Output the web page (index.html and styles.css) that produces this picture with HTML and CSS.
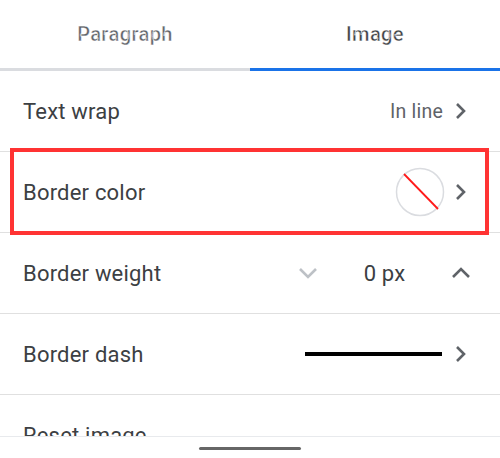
FILE: index.html
```html
<!DOCTYPE html>
<html lang="en">
<head>
    <meta charset="UTF-8">
    <meta name="viewport" content="width=device-width, initial-scale=1.0">
    <title>Image options</title>
    <link rel="stylesheet" href="styles.css">
</head>
<body>
    <div class="screen">
        <!-- 탭 -->
        <div class="tabs">
            <div class="tab">Paragraph</div>
            <div class="tab active">Image</div>
        </div>

        <!-- 옵션 목록 -->
        <div class="options">
            <div class="row">
                <span class="label">Text wrap</span>
                <div class="value">
                    <span class="value-text">In line</span>
                    <svg class="chev" viewBox="0 0 12 18"><path d="M2 2l7 7-7 7" /></svg>
                </div>
            </div>
            <div class="row highlighted">
                <span class="label">Border color</span>
                <div class="value">
                    <svg class="swatch" viewBox="0 0 50 50">
                        <circle cx="25" cy="25" r="23.5" fill="#fff" stroke="#dadce0" stroke-width="1.5" />
                        <line x1="9" y1="7" x2="43" y2="42" stroke="#ff1a1a" stroke-width="1.8" />
                    </svg>
                    <svg class="chev" viewBox="0 0 12 18"><path d="M2 2l7 7-7 7" /></svg>
                </div>
                <div class="mark"></div>
            </div>
            <div class="row">
                <span class="label">Border weight</span>
                <div class="stepper">
                    <svg class="arrow dim" viewBox="0 0 20 12"><path d="M2 2l8 8 8-8" /></svg>
                    <span class="step-value">0 px</span>
                    <svg class="arrow" viewBox="0 0 20 12"><path d="M2 10l8-8 8 8" /></svg>
                </div>
            </div>
            <div class="row">
                <span class="label">Border dash</span>
                <div class="value">
                    <span class="dash"></span>
                    <svg class="chev" viewBox="0 0 12 18"><path d="M2 2l7 7-7 7" /></svg>
                </div>
            </div>
            <div class="row">
                <span class="label">Reset image</span>
            </div>
        </div>

        <div class="navbar">
            <span class="handle"></span>
        </div>
    </div>
</body>
</html>
```

FILE: styles.css
```css
/* 기본 스타일 */
body {
    margin: 0;
    font-family: Roboto, "Noto Sans", Arial, sans-serif;
    background-color: #fff;
    color: #3c4043;
}

.screen {
    position: relative;
    width: 500px;
    height: 458px;
    overflow: hidden;
    display: flex;
    flex-direction: column;
}

/* 탭 */
.tabs {
    display: flex;
    height: 71px;
    flex-shrink: 0;
}

.tab {
    flex: 1;
    display: flex;
    align-items: center;
    justify-content: center;
    font-size: 20px;
    font-weight: 500;
    letter-spacing: 0.4px;
    color: #5f6368;
    border-bottom: 3px solid #dadce0;
    -webkit-text-stroke: 0.35px #fff;
}

.tab.active {
    color: #3c4043;
    border-bottom-color: #1a73e8;
}

/* 옵션 목록 */
.options {
    height: 365px;
    overflow: hidden;
    flex-shrink: 0;
}

.row {
    position: relative;
    height: 80px;
    display: flex;
    align-items: center;
    justify-content: space-between;
    padding: 0 33px 0 23px;
    border-bottom: 1px solid #e0e0e0;
}

.label {
    font-size: 22px;
    letter-spacing: 0.2px;
    color: #3c4043;
}

.value {
    display: flex;
    align-items: center;
    gap: 12px;
}

.value-text {
    font-size: 19.5px;
    letter-spacing: 0.2px;
    color: #5f6368;
}

.chev {
    width: 12px;
    height: 18px;
    fill: none;
    stroke: #5f6368;
    stroke-width: 2.6;
}

.swatch {
    width: 50px;
    height: 50px;
    margin-right: -2px;
}

.dash {
    display: block;
    width: 137px;
    height: 4px;
    margin-right: 1px;
    background-color: #000;
}

.stepper {
    display: flex;
    align-items: center;
    margin-right: -4px;
}

.arrow {
    width: 20px;
    height: 12px;
    fill: none;
    stroke: #5f6368;
    stroke-width: 2.6;
}

.arrow.dim {
    stroke: #bdc1c6;
}

.step-value {
    width: 133px;
    text-align: center;
    font-size: 22px;
    letter-spacing: 0.2px;
    color: #3c4043;
}

/* 강조 표시 */
.mark {
    position: absolute;
    left: 10px;
    top: -4px;
    width: 471px;
    height: 79px;
    border: 4px solid #ff3333;
    pointer-events: none;
}

/* 하단 내비게이션 */
.navbar {
    flex: 1;
    border-top: 1px solid #e8eaed;
    display: flex;
    justify-content: center;
    padding-top: 10px;
}

.handle {
    width: 102px;
    height: 3px;
    border-radius: 2px;
    background-color: #666;
}
```
